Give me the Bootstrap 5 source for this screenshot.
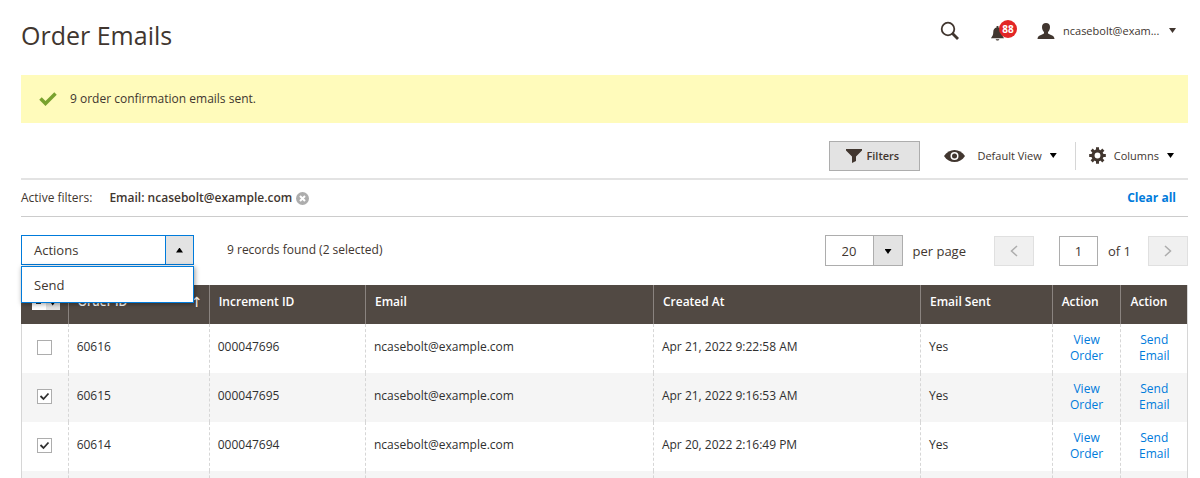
<!DOCTYPE html>
<html lang="en">
<head>
<meta charset="utf-8">
<meta name="viewport" content="width=device-width, initial-scale=1">
<title>Order Emails</title>
<link href="https://cdn.jsdelivr.net/npm/bootstrap@5.3.0/dist/css/bootstrap.min.css" rel="stylesheet">
<style>
  :root { --ink: #41362f; --line: #adadad; --link: #007bdb; }
  body { font-family: "Open Sans", "Noto Sans", sans-serif; font-size: 12px; line-height: 16px; color: var(--ink); background: #fff; }
  .page { padding: 0 12px 0 21px; }
  .page-head { height: 75px; padding-bottom: 5px; }
  .page-title { font-size: 25px; line-height: 32px; }
  a { color: var(--link); text-decoration: none; }
  .plain { background: none; border: 0; padding: 0; color: inherit; }
  svg { display: block; flex: none; }
  .caret-down, .caret-up { width: 7px; height: 5px; background: #000; flex: none; }
  .caret-down { clip-path: polygon(0 0, 100% 0, 50% 100%); }
  .caret-up { clip-path: polygon(0 100%, 100% 100%, 50% 0); }
  .head-tools { padding-bottom: 9px; }
  .search { margin-right: 30px; }
  .bell { width: 27px; height: 22px; margin-right: 20px; }
  .bell svg { margin-top: 6px; }
  .bell .count { position: absolute; right: 0; top: 0; width: 18px; height: 18px; border-radius: 9px; background: #e22626; color: #fff; font-size: 10px; font-weight: 700; line-height: 18px; text-align: center; }
  .account { padding-right: 12px; }
  .account .caret-down { background: var(--ink); }
  .user-name { font-size: 11px; min-width: 98px; text-align: left; }
  .notice { background: #fffbbb; height: 48px; margin-bottom: 1px; padding: 0 18px; gap: 13px; }
  .tools { height: 56px; padding-top: 9px; border-bottom: 2px solid #e3e3e3; font-size: 11px; }
  .btn-filter { width: 91px; height: 30px; border: 1px solid var(--line); border-radius: 0; background: #e3e3e3; font-size: 11px; font-weight: 600; line-height: 16px; padding: 0 16px; gap: 4px; color: var(--ink); }
  .tool-view { margin-left: 24px; margin-right: 18px; }
  .tool-columns { height: 28px; border-left: 1px solid #d6d6d6; padding: 0 14px 0 13px; }
  .active-filters { height: 37px; border-bottom: 1px solid #ccc; padding-right: 12px; }
  .filter-chip { margin-left: 17px; }
  .clear-all { font-size: 12px; font-weight: 700; }
  .grid-bar { height: 68px; padding-top: 18px; font-size: 13px; }
  .actions { width: 173px; }
  .actions-toggle { width: 100%; height: 30px; border: 1px solid #007bdb; background: #fff; padding: 0 0 0 12px; color: var(--ink); }
  .actions-toggle .arrow { width: 28px; height: 28px; background: #e3e3e3; border-left: 1px solid #007bdb; }
  .actions .dropdown-menu { top: 31px; left: 0; width: 100%; min-width: 0; height: 37px; padding: 0; margin: 0; border: 1px solid #007bdb; border-radius: 0; box-shadow: 1px 1px 5px rgba(0,0,0,.4); }
  .actions .dropdown-item { height: 35px; padding: 0 12px; font-size: 13px; color: var(--ink); }
  .found { font-size: 12px; line-height: 30px; margin-left: 33px; }
  .page-size { position: relative; width: 78px; height: 31px; border: 1px solid var(--line); }
  .page-size select { appearance: none; width: 100%; height: 100%; border: 0; background: linear-gradient(#e3e3e3, #e3e3e3) right / 28px 100% no-repeat #fff; padding: 0 0 0 16px; color: var(--ink); border-radius: 0; }
  .page-size::after { content: ""; position: absolute; right: 28px; top: 0; bottom: 0; border-left: 1px solid var(--line); }
  .page-size .caret-down { position: absolute; right: 10px; top: 13px; pointer-events: none; }
  .per-page { margin: 0 28px 0 10px; }
  .of-pages { margin: 0 17px 0 10px; }
  .pager-btn { width: 40px; height: 30px; border: 1px solid #e0e0e0; background: #f0f0f0; padding: 0; }
  .page-input { width: 39px; height: 30px; border: 1px solid var(--line); padding: 0; margin-left: 25px; text-align: center; color: var(--ink); }
  .orders { table-layout: fixed; margin: 0; border-collapse: separate; border-spacing: 0; border-right: 1px solid #d6d6d6; width: 100%; color: #303030; font-size: 12px; line-height: 16px; }
  .orders th { height: 39px; background: #514943; color: #fff; font-weight: 600; padding: 0 9px 5px; vertical-align: middle; border-left: 1px solid #8a837f; }
  .orders th:first-child { border-left-color: #514943; padding: 0 8px 3px 10px; }
  .orders th.sorted { padding-right: 6px; }
  .sort-arrow { font-family: "DejaVu Sans", sans-serif; font-size: 14px; font-weight: 400; }
  .orders td { height: 49px; padding: 0 9px 4px 8px; vertical-align: middle; border-left: 1px dashed #d6d6d6; }
  .orders td:first-child { border-left: 1px solid #d6d6d6; padding: 0 15px 2px; }
  .orders td.act { text-align: center; padding: 0 16px 2px; line-height: 16px; }
  .orders tbody tr:nth-child(even) td { background: #f5f5f5; }
  .orders tbody tr.rest td { height: 7px; padding: 0; }
  .tick { appearance: none; display: block; width: 15px; height: 15px; margin: 0; border: 1px solid var(--line); background: #fff; }
  .tick:checked { background: #fff url("data:image/svg+xml,%3Csvg xmlns='http://www.w3.org/2000/svg' viewBox='0 0 13 13'%3E%3Cpath d='M2.500 6l3 3L10.500 3.500' fill='none' stroke='%23303030' stroke-width='1.800'/%3E%3C/svg%3E") center / 13px 13px; }
  .head-tick { width: 14px; height: 14px; border: 0; background: linear-gradient(#303030, #303030) center / 5px 2px no-repeat #fff; }
  .head-more { width: 14px; height: 14px; background: #e3e3e3; border: 0; padding: 0; }
</style>
</head>
<body>
<div class="page">
  <header class="page-head d-flex align-items-center justify-content-between">
    <h1 class="page-title fw-normal m-0">Order Emails</h1>
    <div class="head-tools d-flex align-items-center">
      <button class="plain search" aria-label="Search">
        <svg width="20" height="20" viewBox="0 0 20 20" fill="none" stroke="#41362f"><circle cx="8" cy="8" r="6.300" stroke-width="1.800"/><path d="M12.500 12.500L18 18" stroke-width="2.800"/></svg>
      </button>
      <button class="plain bell position-relative" aria-label="Notifications">
        <svg width="15" height="15" viewBox="0 0 15 16" fill="#41362f"><path d="M6.500 0h2v1.500c2.500.5 3.500 2.500 3.500 5 0 3 1 4.500 2.500 6.500h-14C2 11 3 9.500 3 6.500c0-2.500 1-4.500 3.500-5zM5.500 14h4c-.5 2-3.500 2-4 0z"/></svg>
        <span class="count">88</span>
      </button>
      <button class="plain account d-flex align-items-center">
        <svg width="18" height="16" viewBox="0 0 18 16" fill="#41362f"><path d="M9 0c2.500 0 4 1.500 4 4 0 2.500-1 4-2 5v1.500c1 1 6.500 1.500 6.500 5.500H.5C.5 12 6 11.500 7 10.500V9C6 8 5 6.500 5 4c0-2.500 1.500-4 4-4z"/></svg>
        <span class="user-name ms-2">ncasebolt@exam...</span>
        <span class="caret-down ms-2"></span>
      </button>
    </div>
  </header>

  <div class="notice d-flex align-items-center" role="status">
    <svg width="18" height="14" viewBox="0 0 18 14"><path d="M1.500 6.500l5 5L16.500 1.500" fill="none" stroke="#79a22e" stroke-width="3.500"/></svg>
    <span>9 order confirmation emails sent.</span>
  </div>

  <div class="tools d-flex align-items-center justify-content-end">
    <button class="btn btn-filter d-flex align-items-center">
      <svg width="16" height="14" viewBox="0 0 16 14" fill="#41362f"><path d="M0 0h16v1.500L10 7.500V12l-4 2V7.500L0 1.500z"/></svg>
      Filters
    </button>
    <button class="plain tool-view d-flex align-items-center">
      <svg width="21" height="12" viewBox="0 0 21 12"><path d="M0 6C5-2 16-2 21 6 16 14 5 14 0 6z" fill="#41362f"/><circle cx="10.500" cy="6" r="4" fill="#fff"/><circle cx="10.500" cy="6" r="2.500" fill="#41362f"/></svg>
      <span class="ms-2 ps-1">Default View</span>
      <span class="caret-down ms-2"></span>
    </button>
    <button class="plain tool-columns d-flex align-items-center">
      <svg width="17" height="17" viewBox="-9 -9 18 18" stroke="#41362f"><circle r="4.800" fill="none" stroke-width="3.400"/><path d="M0-5.500V-8.800M0 5.500V8.800M-5.500 0H-8.800M5.500 0H8.800M-4-4L-6.200-6.200M4 4L6.200 6.200M-4 4L-6.200 6.200M4-4L6.200-6.200" stroke-width="3.200"/></svg>
      <span class="ms-2">Columns</span>
      <span class="caret-down ms-2"></span>
    </button>
  </div>

  <div class="active-filters d-flex align-items-center">
    <span>Active filters:</span>
    <span class="filter-chip fw-semibold">Email: ncasebolt@example.com</span>
    <button class="plain ms-1" aria-label="Remove filter">
      <svg width="13" height="13" viewBox="0 0 13 13"><circle cx="6.500" cy="6.500" r="6.500" fill="#adadad"/><path d="M4 4l5 5M9 4l-5 5" stroke="#fff" stroke-width="2"/></svg>
    </button>
    <a class="clear-all ms-auto" href="#">Clear all</a>
  </div>

  <div class="grid-bar d-flex align-items-start">
    <div class="actions dropdown">
      <button class="actions-toggle d-flex align-items-center justify-content-between" aria-expanded="true">
        Actions
        <span class="arrow d-flex align-items-center justify-content-center"><span class="caret-up"></span></span>
      </button>
      <div class="dropdown-menu show">
        <button class="dropdown-item">Send</button>
      </div>
    </div>
    <div class="found">9 records found (2 selected)</div>
    <div class="d-flex align-items-center ms-auto">
      <div class="page-size">
        <select id="size" aria-label="Records per page"><option>20</option></select>
        <span class="caret-down"></span>
      </div>
      <label class="per-page" for="size">per page</label>
      <button class="pager-btn" aria-label="Previous page" disabled>
        <svg class="mx-auto" width="8" height="12" viewBox="0 0 8 12" fill="none" stroke="#adadad" stroke-width="1.500"><path d="M7 1L1.500 6 7 11"/></svg>
      </button>
      <input class="page-input" id="page" type="text" value="1">
      <label class="of-pages" for="page">of 1</label>
      <button class="pager-btn" aria-label="Next page" disabled>
        <svg class="mx-auto" width="8" height="12" viewBox="0 0 8 12" fill="none" stroke="#adadad" stroke-width="1.500"><path d="M1 1l5.500 5L1 11"/></svg>
      </button>
    </div>
  </div>

  <table class="orders">
    <colgroup>
      <col style="width:4%"><col style="width:12.100%"><col style="width:13.400%"><col style="width:24.700%"><col style="width:22.900%"><col style="width:11.300%"><col style="width:5.900%"><col>
    </colgroup>
    <thead>
      <tr>
        <th><div class="d-flex"><input class="tick head-tick" type="checkbox" aria-label="Select all"><button class="head-more d-flex align-items-center justify-content-center" aria-label="Selection options"><span class="caret-down"></span></button></div></th>
        <th class="sorted"><div class="d-flex justify-content-between">Order ID <span class="sort-arrow">↑</span></div></th>
        <th>Increment ID</th><th>Email</th><th>Created At</th><th>Email Sent</th><th>Action</th><th>Action</th>
      </tr>
    </thead>
    <tbody>
      <tr><td><input class="tick" type="checkbox" aria-label="Select order 60616"></td><td>60616</td><td>000047696</td><td>ncasebolt@example.com</td><td>Apr 21, 2022 9:22:58 AM</td><td>Yes</td><td class="act"><a href="#">View Order</a></td><td class="act"><a href="#">Send Email</a></td></tr>
      <tr><td><input class="tick" type="checkbox" aria-label="Select order 60615" checked></td><td>60615</td><td>000047695</td><td>ncasebolt@example.com</td><td>Apr 21, 2022 9:16:53 AM</td><td>Yes</td><td class="act"><a href="#">View Order</a></td><td class="act"><a href="#">Send Email</a></td></tr>
      <tr><td><input class="tick" type="checkbox" aria-label="Select order 60614" checked></td><td>60614</td><td>000047694</td><td>ncasebolt@example.com</td><td>Apr 20, 2022 2:16:49 PM</td><td>Yes</td><td class="act"><a href="#">View Order</a></td><td class="act"><a href="#">Send Email</a></td></tr>
      <tr class="rest"><td></td><td></td><td></td><td></td><td></td><td></td><td></td><td></td></tr>
    </tbody>
  </table>
</div>
<script src="https://cdn.jsdelivr.net/npm/bootstrap@5.3.0/dist/js/bootstrap.bundle.min.js"></script>
</body>
</html>
